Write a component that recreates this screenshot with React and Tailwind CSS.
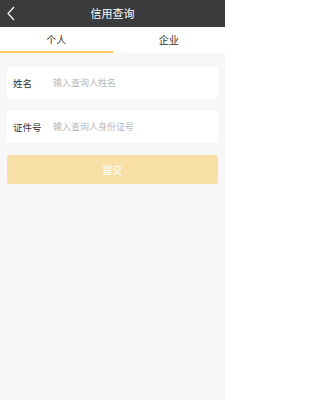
import React, { useState } from "react";

const FONT = { fontFamily: '"Noto Sans CJK SC", "Noto Sans", sans-serif' };

const Field = ({ label, placeholder }) => (
  <div className="flex items-center h-[32px] bg-white rounded-[3px] px-[6px]">
    <span className="w-[40px] text-[9.5px] text-[#333333]">{label}</span>
    <input
      className="flex-1 min-w-0 text-[9px] text-[#333] placeholder:text-[#b8b8b8] outline-none bg-transparent"
      placeholder={placeholder}
    />
  </div>
);

export default function App() {
  const [tab, setTab] = useState(0);

  return (
    <div className="w-[225px] h-[400px] bg-[#f7f7f7] flex flex-col" style={FONT}>
      <div className="h-[27px] bg-[#3a3b3d] flex items-center relative">
        <button className="w-[22px] h-[27px] flex items-center justify-center">
          <svg width="8" height="15" viewBox="0 0 8 15" fill="none">
            <path d="M7 1L1 7.5L7 14" stroke="#ffffff" strokeWidth="1.2" />
          </svg>
        </button>
        <span className="absolute left-0 right-0 text-center text-[11px] text-white pointer-events-none">
          信用查询
        </span>
      </div>

      <div className="h-[26px] bg-white flex">
        {["个人", "企业"].map((t, i) => (
          <button
            key={t}
            onClick={() => setTab(i)}
            className={
              "flex-1 flex items-center justify-center text-[10px] text-[#333] border-b-2 " +
              (tab === i ? "border-[#f6c867]" : "border-transparent")
            }
          >
            {t}
          </button>
        ))}
      </div>

      <div className="px-[7px] pt-[14px] flex flex-col gap-[12px]">
        <Field label="姓名" placeholder="输入查询人姓名" />
        <Field label="证件号" placeholder="输入查询人身份证号" />
        <button className="h-[29px] rounded-[3px] bg-[#f7dfa6] text-white text-[10px]">
          提交
        </button>
      </div>
    </div>
  );
}
